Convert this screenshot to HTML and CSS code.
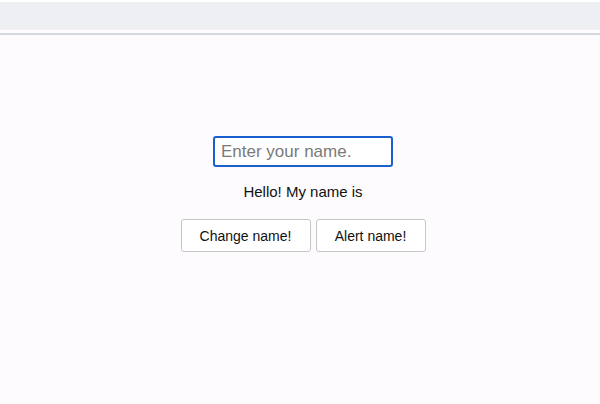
FILE: index.html
```html
<!DOCTYPE html>
<html lang="en">
<head>
    <meta charset="UTF-8">
    <meta name="viewport" content="width=device-width, initial-scale=1.0">
    <title>Name</title>
    <link rel="stylesheet" href="styles.css">
</head>
<body>

<div class="toolbar"></div>
<div class="divider"></div>

<div class="container">
    <input type="text" id="nameInput" class="name-input" placeholder="Enter your name." autofocus />
    <p class="greeting" id="greeting">Hello! My name is</p>
    <div class="buttons">
        <button class="change-button" onclick="changeName()">Change name!</button>
        <button class="alert-button" onclick="alertName()">Alert name!</button>
    </div>
</div>

<script>
    function changeName() {
        const name = document.getElementById('nameInput').value;
        document.getElementById('greeting').textContent = 'Hello! My name is ' + name;
    }

    function alertName() {
        alert(document.getElementById('nameInput').value);
    }
</script>

</body>
</html>
```

FILE: styles.css
```css
body {
    font-family: "Liberation Sans", Arial, sans-serif;
    margin: 0;
    height: 404px;
    background-color: #fdfbfe;
    overflow: hidden;
}
.toolbar {
    height: 28px;
    border-top: 2px solid #ffffff;
    background-color: #eeeff2;
}
.divider {
    height: 2px;
    margin-top: 3px;
    background-color: #d3d8de;
}
.container {
    display: flex;
    flex-direction: column;
    align-items: center;
    padding: 101px 0 0 6px;
}
.name-input {
    box-sizing: border-box;
    width: 180px;
    height: 31px;
    padding: 0 6px;
    font-family: inherit;
    font-size: 17px;
    border: 2px solid #1a5fd0;
    border-radius: 3px;
    outline: none;
    background-color: #ffffff;
}
.name-input::placeholder {
    color: #7a7a7a;
}
.greeting {
    margin: 16px 0 0;
    font-size: 15px;
    color: #111111;
}
.buttons {
    display: flex;
    gap: 5px;
    margin-top: 19px;
}
button {
    height: 33px;
    font-family: inherit;
    font-size: 14px;
    color: #111111;
    background-color: #ffffff;
    border: 1px solid #c6c6c6;
    border-radius: 3px;
    cursor: pointer;
}
.change-button {
    width: 130px;
}
.alert-button {
    width: 110px;
}
```
